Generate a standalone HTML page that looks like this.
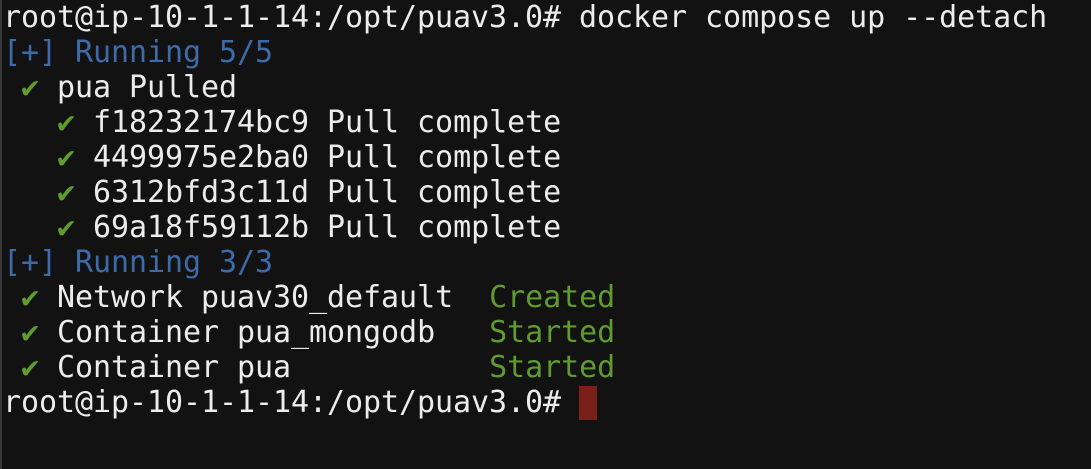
<!DOCTYPE html>
<html><head><meta charset="utf-8"><style>
html,body{margin:0;padding:0;background:#121212;width:1091px;height:469px;overflow:hidden}
.t{position:absolute;left:3px;top:0;font-family:"DejaVu Sans Mono","Liberation Mono",monospace;font-size:30px;line-height:35px;letter-spacing:-0.06px;color:#ececec;white-space:pre}
.b{color:#3d6aa8}.g{color:#5f9b2e}
.c{display:inline-block;width:18px;height:34px;background:#7a1f1a;vertical-align:-8px}
.edge{position:absolute;left:0;top:0;width:2px;height:469px;background:#3a3a3a}
</style></head><body><div class="edge"></div><div class="t">root@ip-10-1-1-14:/opt/puav3.0# docker compose up --detach
<span class="b">[+] Running 5/5</span>
 <span class="g">✔</span> pua Pulled
   <span class="g">✔</span> f18232174bc9 Pull complete
   <span class="g">✔</span> 4499975e2ba0 Pull complete
   <span class="g">✔</span> 6312bfd3c11d Pull complete
   <span class="g">✔</span> 69a18f59112b Pull complete
<span class="b">[+] Running 3/3</span>
 <span class="g">✔</span> Network puav30_default  <span class="g">Created</span>
 <span class="g">✔</span> Container pua_mongodb   <span class="g">Started</span>
 <span class="g">✔</span> Container pua           <span class="g">Started</span>
root@ip-10-1-1-14:/opt/puav3.0# <span class="c"></span></div></body></html>
